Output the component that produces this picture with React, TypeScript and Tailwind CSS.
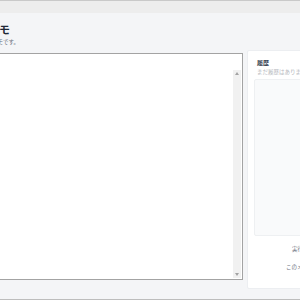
export default function App() {
  return (
    <div className="w-[300px] h-[300px] overflow-hidden bg-[#f4f5f7] border-b border-[#bdbdbd] font-['Noto_Sans_CJK_JP',sans-serif] flex flex-col">
      <div className="h-[13px] shrink-0 bg-[#ededed] border-t border-[#c9c9c9]" />
      <div className="flex-1 flex flex-col">
        <div className="pt-[9px] pb-[7px]">
          <h1 className="-ml-[12px] text-[11px] leading-[14px] font-bold text-[#1f2937] whitespace-nowrap">メモ</h1>
          <p className="-ml-[8px] mt-[3px] text-[5.5px] leading-[7px] text-[#6b7280] whitespace-nowrap">メモです。</p>
        </div>
        <div className="flex items-start gap-[4px]">
          <div className="-ml-[20px] w-[263px] h-[227px] shrink-0 bg-white border border-[#a3a3a3] flex justify-end">
            <div className="w-[8px] mt-[16px] mb-[1px] mr-[1px] bg-[#f1f1f1] flex flex-col justify-between items-center py-[2px]">
              <div className="w-0 h-0 border-l-[2px] border-r-[2px] border-b-[3px] border-l-transparent border-r-transparent border-b-[#a3a3a3]" />
              <div className="w-0 h-0 border-l-[2px] border-r-[2px] border-t-[3px] border-l-transparent border-r-transparent border-t-[#a3a3a3]" />
            </div>
          </div>
          <div className="-mt-[3px] w-[90px] h-[239px] shrink-0 bg-white border border-[#eceef1] rounded-[2px] pl-[6px] pt-[8px] flex flex-col">
            <div className="pl-[3px] text-[6px] leading-[8px] font-bold text-[#374151] whitespace-nowrap">履歴</div>
            <div className="pl-[3px] mt-[1px] text-[5.5px] leading-[8px] text-[#b5b8bd] whitespace-nowrap">まだ履歴はありません。</div>
            <div className="mt-[3px] h-[157px] bg-[#f9fafb] border border-[#eef0f2] rounded-[2px]" />
            <div className="mt-[9px] pl-[38px] text-[5.5px] leading-[8px] text-[#6b7280] whitespace-nowrap">実行時間</div>
            <div className="mt-[10px] pl-[32px] text-[5.5px] leading-[8px] text-[#6b7280] whitespace-nowrap">このメモについて</div>
          </div>
        </div>
      </div>
    </div>
  );
}
